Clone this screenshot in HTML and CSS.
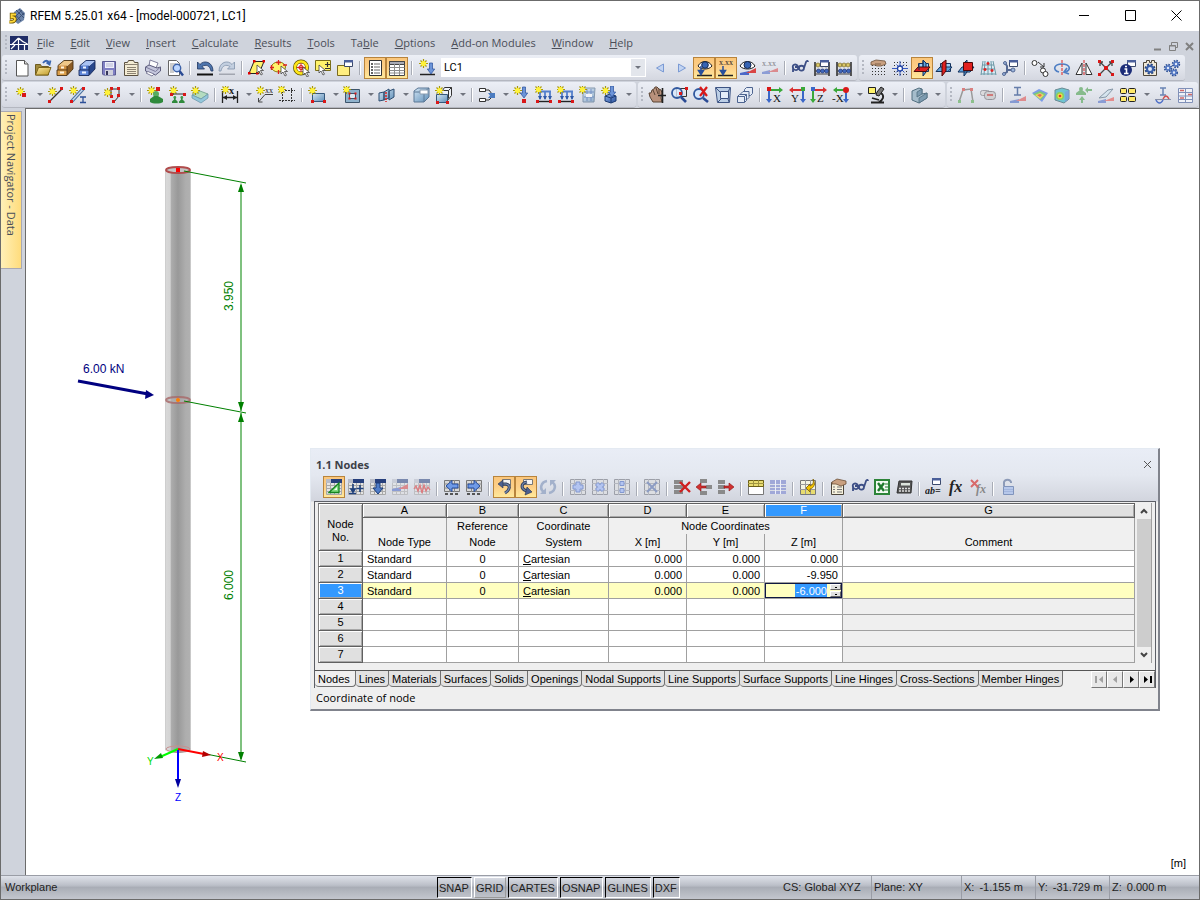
FILE: index.html
```html
<!DOCTYPE html>
<html lang="en">
<head>
    <meta charset="UTF-8">
    <meta name="viewport" content="width=device-width, initial-scale=1.0">
    <title>RFEM 5.25.01 x64 - [model-000721, LC1]</title>
    <link rel="stylesheet" href="styles.css">
</head>
<body>

<!-- icon library -->
<svg class="library" aria-hidden="true">
    <defs>
        <linearGradient id="gold" x1="0" y1="0" x2="1" y2="1"><stop offset="0" stop-color="#fbe9a0"/><stop offset="1" stop-color="#c09a28"/></linearGradient>
        <linearGradient id="steel" x1="0" y1="0" x2="1" y2="1"><stop offset="0" stop-color="#d4e6f5"/><stop offset="1" stop-color="#5f8fb8"/></linearGradient>
        <linearGradient id="navy" x1="0" y1="0" x2="1" y2="1"><stop offset="0" stop-color="#8fb0e8"/><stop offset="1" stop-color="#274f9c"/></linearGradient>
        <linearGradient id="tube" x1="0" y1="0" x2="1" y2="0">
            <stop offset="0" stop-color="#c8c8c8"/><stop offset="0.05" stop-color="#d8d8d8"/><stop offset="0.2" stop-color="#d4d4d4"/>
            <stop offset="0.24" stop-color="#adadad"/><stop offset="0.5" stop-color="#999999"/><stop offset="0.8" stop-color="#aeaeae"/>
            <stop offset="0.95" stop-color="#b0b0b0"/><stop offset="1" stop-color="#d8d8d8"/>
        </linearGradient>
        <pattern id="dots" width="3" height="3" patternUnits="userSpaceOnUse"><path d="M0 0h1v1h-1z" fill="#333"/></pattern>

        <g id="star"><path d="M4.500 0v9M0 4.500h9M1.500 1.500l6 6M7.500 1.500l-6 6" stroke="#a89808" stroke-width="1.200"/><circle cx="4.500" cy="4.500" r="2.600" fill="#fff23a"/></g>
        <path id="cursor" d="M0 0v8l2-2 2 4 1.500-.8-2-3.700h3z" fill="#fff" stroke="#444" stroke-width=".8"/>
        <g id="miniwin"><path d="M.5.5h8v6h-8z" fill="#fff" stroke="#3c4a6c"/><path d="M0 0h9v2.500h-9z" fill="#4a5f9a"/></g>
        <g id="sheet"><path d="M1.500 1.500h15v15h-15z" fill="#e4e4e4"/><path d="M1.500 4v12.500h15v-12.500M1 7.500h16M1 10.500h16M1 13.500h16M5.500 4v13M9.500 4v13M13.500 4v13" fill="none" stroke="#a8a8a8"/><path d="M6 1h11v4h-11z" fill="#263f7c"/><path d="M1 1h5v4h-5z" fill="#b8bcc8"/></g>
        <g id="sheet-ruled"><path d="M1.500 2.500h15v11h-15z" fill="#d8d8d8" stroke="#777"/><path d="M1 6h16M1 10h16M6.500 2v12M11.500 2v12" stroke="#888"/><path d="M2 16h3M7 16h3M12 16h3" stroke="#555" stroke-width="2"/></g>
        <g id="beads"><path d="M2 3v14M16 3v14" stroke="#333" stroke-width="1.600"/><path d="M2 6h14M2 12h14M2 15h14" stroke="#444"/><g fill="#d9c667" stroke="#6b5b18" stroke-width=".6"><circle cx="5" cy="6" r="2"/><circle cx="9" cy="6" r="2"/><circle cx="13" cy="6" r="2"/></g><g fill="#3f67bd" stroke="#1c2d66" stroke-width=".6"><circle cx="5.500" cy="12" r="2"/><circle cx="9.500" cy="12" r="2"/><circle cx="13.500" cy="12" r="2"/></g></g>
        <g id="support"><circle cx="4" cy="2" r="2" fill="#3f9a4a"/><path d="M3 3h2v2l3 3v2h-8v-2l3-3z" fill="#2f8a3c"/></g>
        <path id="arrdown" d="M-1.500 0h3v6h2.200l-3.700 5-3.700-5h2.200z" fill="#6c94d8" stroke="#274f9c" stroke-width=".7"/>
        <path id="arrleft" d="M13 5h-6v-3.500l-6 5.500 6 5.500v-3.500h6z" fill="#6f9ae6" stroke="#1c4496" stroke-width=".9"/>
        <g id="table-gray"><path d="M1.500 1.500h15v15h-15z" fill="#dcdee2" stroke="#9c9fa8"/><path d="M1 5.500h16M1 12.500h16M5.500 1v16M12.500 1v16" stroke="#b4b7c0"/></g>
        <g id="chart-base"><path d="M1 14l9-2v4h-9z" fill="#4b68c8"/><path d="M17 9v5h-10z" fill="#d94545"/></g>
        <g id="cube"><path d="M1 5l4-3h11v9l-5 5h-10z" fill="url(#steel)" stroke="#5c7896"/><path d="M1 6h10v10M11 6l5-4" fill="none" stroke="#5c7896"/></g>

        <symbol id="i-app" viewBox="0 0 18 18"><path d="M6 5l6-4 5 5-1 7-6 4-5-4z" fill="#6c84a8"/><path d="M8 3l8 8M11 2l5 6M6 6l7 8M16 6l-8 8M14 3l-7 7" stroke="#3d5278"/><path d="M8 7.500h-4.500v3c5-1.500 5 5-2 4.300" fill="none" stroke="#6e5600" stroke-width="3.400"/><path d="M8 7.500h-4.500v3c5-1.500 5 5-2 4.300" fill="none" stroke="#ffd93a" stroke-width="1.800"/></symbol>
        <symbol id="i-doc" viewBox="0 0 18 14"><path d="M0 0h18v14H0z" fill="#1f2c66"/><path d="M0 8.500h18M8.500 2v12M8.500 2l-7 7M8.500 2c3 3 6 5 9 6M1 13l4-4M14.500 9v5" fill="none" stroke="#fff" stroke-width="1.200"/></symbol>

        <symbol id="i-new" viewBox="0 0 18 18"><path d="M4.500 1.500h8l3.500 3.500v12h-11.500z" fill="#fff" stroke="#555"/><path d="M12.500 1.500v3.500h3.500" fill="#ddd" stroke="#555"/></symbol>
        <symbol id="i-open" viewBox="0 0 18 18"><path d="M1.500 16v-10.500h5l1 2h7v8.500z" fill="#a08a3c" stroke="#6e5c20"/><path d="M1.500 16l3-7.500h12.500l-3 7.500z" fill="url(#gold)" stroke="#7d6418"/><path d="M9 4c2-3 5-3 6 0M16.500 1.500l-1 4-3-2" fill="none" stroke="#3a66b0" stroke-width="1.800"/></symbol>
        <symbol id="i-cabinet" viewBox="0 0 18 18"><path d="M11 7l6-5v8l-6 6.500z" fill="#8c5c24"/><path d="M2 6.500l6-5h9l-6 5.500z" fill="#f0c888"/><path d="M2 6.500h9v4.500h-9z" fill="#d09040"/><path d="M1 11h10v5.500h-10z" fill="#dca04c"/><path d="M2 6.500l6-5h9v8.500l-6 6.500h-10v-5.500h1zM2 11h9M11 7v9" fill="none" stroke="#4a3214" stroke-width=".9"/><path d="M5 8.500h3M4 13.500h4" stroke="#fff3dc" stroke-width="1.800"/></symbol>
        <symbol id="i-cabinet-blue" viewBox="0 0 18 18"><path d="M11 7l6-5v8l-6 6.500z" fill="#27468c"/><path d="M2 6.500l6-5h9l-6 5.500z" fill="#a9c2f2"/><path d="M2 6.500h9v4.500h-9z" fill="#4c74c8"/><path d="M1 11h10v5.500h-10z" fill="#5f86d8"/><path d="M2 6.500l6-5h9v8.500l-6 6.500h-10v-5.500h1zM2 11h9M11 7v9" fill="none" stroke="#16295a" stroke-width=".9"/><path d="M5 8.500h3M4 13.500h4" stroke="#eef4ff" stroke-width="1.800"/></symbol>
        <symbol id="i-save" viewBox="0 0 18 18"><path d="M2.500 2.500h13v13.500h-12l-1-1z" fill="#8080c4" stroke="#5a5a92"/><path d="M5 3h9v6h-9z" fill="#eef0fa"/><path d="M6 5h7M6 7h7" stroke="#b4b5d2"/><path d="M5 11h8v5h-8z" fill="#cfd0dc"/><path d="M6 12h2v4h-2z" fill="#34345a"/></symbol>
        <symbol id="i-report" viewBox="0 0 18 18"><path d="M2.500 3.500h3l1-2h5l1 2h3.500v13h-13.500z" fill="#f4ecd4" stroke="#5a5040"/><path d="M2.500 5.500h13.500M5 8.500h9M5 10.500h9M5 12.500h9M5 14.500h9" stroke="#8c8272"/></symbol>
        <symbol id="i-print" viewBox="0 0 18 18"><path d="M5 7l1-6 8 3-2 5z" fill="#fff" stroke="#80809c"/><path d="M1.500 8l3.500-2 8 3 3.500-1v4l-5 4-10-4z" fill="#c4c6dc" stroke="#5c5c7c"/><path d="M1.500 8l10 4.500 5-4.500" fill="none" stroke="#7c7c9c"/><path d="M4 12.500l6 2.500-2 2-6-3z" fill="#fff" stroke="#80809c"/></symbol>
        <symbol id="i-preview" viewBox="0 0 18 18"><path d="M2.500 1.500h8l3 3v12h-11z" fill="#fff" stroke="#666"/><path d="M4 5h6M4 7h4M4 9h3M4 11h3M4 13h4" stroke="#999"/><circle cx="11" cy="9" r="3.700" fill="#bcd6ff" stroke="#3d62a8" stroke-width="1.400"/><path d="M13.500 12l3.500 4.500" stroke="#2a4a94" stroke-width="2.400"/></symbol>
        <symbol id="i-undo" viewBox="0 0 18 18"><path d="M1.500 3v7h7l-2.500-2.500c4-2.500 8-1 9 4.500h2c0-9-9-11.500-13-6.500z" fill="#4f76ae" stroke="#1e3560" stroke-width=".8"/><path d="M1 14.500h16v2h-16z" fill="#111"/></symbol>
        <symbol id="i-redo" viewBox="0 0 18 18"><path d="M16.500 3v7h-7l2.500-2.500c-4-2.500-8-1-9 4.500h-2c0-9 9-11.500 13-6.500z" fill="#c3cfe0" stroke="#8193ab" stroke-width=".8"/><path d="M1 14.500h16v1.500h-16z" fill="#a2a6b0"/></symbol>
        <symbol id="i-sel-plane" viewBox="0 0 18 18"><path d="M6 2.500h10l-5 12h-10z" fill="#fff36b" stroke="#222"/><path d="M5 1h2.500v2.500h-2.500zM14.500 1h2.500v2.500h-2.500zM0 13h2.500v2.500h-2.500zM8 13h2.500v2.500h-2.500z" fill="#d00"/><use href="#cursor" x="9" y="6"/></symbol>
        <symbol id="i-sel-ellipse" viewBox="0 0 18 18"><ellipse cx="8.500" cy="8" rx="7" ry="5" fill="#fff36b" stroke="#8a7a10"/><path d="M8.500 1v5M6 3.500h5M1.500 6v5M0 8.500h4M8.500 11v4M13 6h4" stroke="#d22" stroke-width="1.300"/><use href="#cursor" x="11" y="7"/></symbol>
        <symbol id="i-sel-ring" viewBox="0 0 18 18"><circle cx="9" cy="8.500" r="6" fill="#fff" stroke="#5c5200" stroke-width="4"/><circle cx="9" cy="8.500" r="6" fill="none" stroke="#ffe619" stroke-width="2.600"/><circle cx="9" cy="8.500" r="2" fill="#fff" stroke="#d22" stroke-width="1.200"/><path d="M9 4v9M5 8.500h8" stroke="#d22"/><use href="#cursor" x="11" y="8"/></symbol>
        <symbol id="i-sel-plus" viewBox="0 0 18 18"><path d="M1.500 1.500h15v10h-15z" fill="#fff36b" stroke="#7a6e18"/><path d="M11 5.500h5M13.500 3v5M11 9.500h5" stroke="#333" stroke-width="1.200"/><use href="#cursor" x="5" y="6"/></symbol>
        <symbol id="i-yellow-win" viewBox="0 0 18 18"><path d="M1.500 6.500h12v10h-12z" fill="#ffee80" stroke="#7a6a20"/><use href="#miniwin" x="8" y="1"/></symbol>
        <symbol id="i-list" viewBox="0 0 18 18"><path d="M3.500 1.500h12v15h-12z" fill="#fff" stroke="#333"/><path d="M5 5h2M5 8h2M5 11h2M5 14h2" stroke="#333" stroke-width="1.400"/><path d="M8 5h6M8 8h6M8 11h6M8 14h6" stroke="#666"/></symbol>
        <symbol id="i-table" viewBox="0 0 18 18"><path d="M1.500 2.500h15v14h-15z" fill="#fff" stroke="#444"/><path d="M1.500 2.500h15v3h-15z" fill="#a8aab4" stroke="#444"/><path d="M1.500 8.500h15M1.500 11.500h15M1.500 14h15M6.500 5v11M11.500 5v11" stroke="#8c8c8c"/></symbol>
        <symbol id="i-loadcase" viewBox="0 0 18 18"><use href="#star" x="1"/><path d="M2 15.500h15" stroke="#222" stroke-width="1.500"/><use href="#arrdown" x="13" y="4"/></symbol>
        <symbol id="i-prev" viewBox="0 0 18 18"><path d="M12.500 5v8l-7-4z" fill="#c2d4f2" stroke="#7a9ad4"/></symbol>
        <symbol id="i-next" viewBox="0 0 18 18"><path d="M5.500 5v8l7-4z" fill="#c2d4f2" stroke="#7a9ad4"/></symbol>
        <symbol id="i-eye-load" viewBox="0 0 18 18"><path d="M3 7c3-6 11-6 14 0-3 4-11 4-14 0z" fill="#fff" stroke="#222"/><circle cx="10" cy="6" r="3.300" fill="#3564b4" stroke="#14284e"/><path d="M2 16.500h15" stroke="#222" stroke-width="1.500"/><path d="M6 7v7M3.500 11.500l2.500 4 2.500-4z" fill="#274f9c" stroke="#274f9c" stroke-width="1.500"/></symbol>
        <symbol id="i-xxx-load" viewBox="0 0 18 18"><text x="2" y="6" class="glyph">x.xx</text><path d="M1 16.500h15" stroke="#222" stroke-width="1.500"/><path d="M6 7v7M3.500 11.500l2.500 4 2.500-4z" fill="#274f9c" stroke="#274f9c" stroke-width="1.500"/></symbol>
        <symbol id="i-eye-result" viewBox="0 0 18 18"><use href="#chart-base"/><path d="M1 7c3-6 12-6 15 0-3 4-12 4-15 0z" fill="#fff" stroke="#222"/><circle cx="8.500" cy="6" r="3.500" fill="#3564b4" stroke="#14284e"/></symbol>
        <symbol id="i-xxx-result" viewBox="0 0 18 18"><g opacity=".55"><text x="1" y="7" class="glyph">x.xx</text><path d="M1 13l8-2v4h-8z" fill="#4b68c8"/><path d="M17 9v4h-10z" fill="#d94545"/></g></symbol>
        <symbol id="i-glasses" viewBox="0 0 18 18"><path d="M7 7c-3-3-6-1-5 2s6 3 5-1l-3 0M8 9c0-3 5-3 5 0s-5 4-5 0M13 9l2-6c1-2 2-1 2 0M2 8v5" fill="none" stroke="#3d4f86" stroke-width="1.800"/></symbol>
        <symbol id="i-beads" viewBox="0 0 18 18"><use href="#beads"/></symbol>
        <symbol id="i-beads-win" viewBox="0 0 18 18"><use href="#beads"/><use href="#miniwin" x="7" y="1"/></symbol>
        <symbol id="i-grid-hand" viewBox="0 0 18 18"><path d="M2 6h15v11h-15z" fill="url(#dots)"/><path d="M2 3l5-2 9 1 1 3-5 2h-4l-2-1-4 0z" fill="#c9a080" stroke="#6c5038" stroke-width=".8"/><path d="M6 5l6 0" stroke="#6c5038" stroke-width=".8"/></symbol>
        <symbol id="i-grid-snap" viewBox="0 0 18 18"><path d="M1 2h16v15h-16z" fill="url(#dots)"/><path d="M9 2v15M1 9.500h16M5.500 5.500l8 8M13 5.500l-8 8" stroke="#3a5cc0"/><circle cx="9" cy="9.500" r="2.500" fill="#fff" stroke="#2244a8" stroke-width="1.300"/></symbol>
        <symbol id="i-wp-xy" viewBox="0 0 18 18"><path d="M5.500 4.500h10v8h-10z" fill="#9ccef4" stroke="#12305c"/><path d="M10 1l3 3v9l-3 4z" fill="#5fa4de" stroke="#12305c"/><path d="M5 8h12l-4 4.500h-12z" fill="#e02020" stroke="#4c0808"/><path d="M6 5v6M10 2v6" stroke="#12305c"/></symbol>
        <symbol id="i-wp-yz" viewBox="0 0 18 18"><path d="M5.500 4.500h10v8h-10z" fill="#9ccef4" stroke="#12305c"/><path d="M5 8h12l-4 4.500h-12z" fill="#5fa4de" stroke="#12305c"/><path d="M7 4l4-3v11l-4 5z" fill="#e02020" stroke="#4c0808"/></symbol>
        <symbol id="i-wp-xz" viewBox="0 0 18 18"><path d="M5 8h12l-4 5h-12zM7 4l3-3v12l-3 4z" fill="#5fa4de" stroke="#12305c"/><path d="M6.500 3.500h9v8h-9z" fill="#e02020" stroke="#4c0808"/></symbol>
        <symbol id="i-grid-red" viewBox="0 0 18 18"><path d="M4 2h10l3 14h-15z" fill="#dcecf6"/><path d="M4 2l-2 14M9 2v14M14 2l3 14M3 6h12M3 10h13M2 15h15M6 2l-1 14M12 2l1 14" stroke="#6d97a4"/><path d="M9 3v3M7.500 4.500h3M6 9v3M4.500 10.500h3M13 10v3M11.500 11.500h3" stroke="#d22" stroke-width="1.500"/></symbol>
        <symbol id="i-branch" viewBox="0 0 18 18"><path d="M3 15l3-2v-6l-2-3M6 11h6" fill="none" stroke="#566a94" stroke-width="2"/><circle cx="4" cy="4" r="1.500" fill="#9ab4dc" stroke="#566a94"/><circle cx="12" cy="11" r="2" fill="#9ab4dc" stroke="#566a94"/><circle cx="3" cy="15" r="1.500" fill="#9ab4dc" stroke="#566a94"/><use href="#miniwin" x="8" y="1"/></symbol>
        <symbol id="i-copy" viewBox="0 0 18 18"><g fill="#fff" stroke="#333"><circle cx="3.500" cy="4" r="2.500"/><circle cx="12" cy="11.500" r="2.500"/><circle cx="14.500" cy="15" r="2.500"/></g><path d="M7 3l6 5M13 4v4h-4" fill="none" stroke="#333"/></symbol>
        <symbol id="i-rotate" viewBox="0 0 18 18"><path d="M6 13c-7-2-5-8 3-8s10 6 3 8M14 9l-3 4 5 2" fill="none" stroke="#4f7fc4" stroke-width="1.700"/><path d="M9 1v16" stroke="#d22" stroke-dasharray="3 1"/></symbol>
        <symbol id="i-mirror" viewBox="0 0 18 18"><path d="M7 4v11.500h-6zM11 4v11.500h6z" fill="#fff" stroke="#333"/><path d="M9 1v16" stroke="#d22" stroke-dasharray="3 1"/></symbol>
        <symbol id="i-scale" viewBox="0 0 18 18"><path d="M3 3l12 12M15 3l-12 12M3 7v-4h3M15 7v-4h-3" fill="none" stroke="#444" stroke-width="1.300"/><path d="M1 1h3v3h-3zM14 1h3v3h-3zM1 14h3v3h-3zM14 14h3v3h-3zM7 7h4v4h-4z" fill="#d91818"/></symbol>
        <symbol id="i-info" viewBox="0 0 18 18"><use href="#miniwin" x="8" y="1"/><circle cx="7" cy="11" r="6" fill="#1b2c78"/><path d="M6 7.500h2M5.500 10h2v4M5 14.500h4.500" stroke="#fff" stroke-width="1.600" fill="none"/></symbol>
        <symbol id="i-settings" viewBox="0 0 18 18"><path d="M2.500 3.500h3v-2h3v2h2v-2h3v2h2v13h-13z" fill="#f2ead8" stroke="#4d463a"/><circle cx="9" cy="10" r="4.200" fill="none" stroke="#284884" stroke-width="2.600" stroke-dasharray="2 1.300"/><circle cx="9" cy="10" r="3" fill="#dfe9f8" stroke="#3a5fa8" stroke-width="2"/></symbol>
        <symbol id="i-gears" viewBox="0 0 18 18"><g fill="none" stroke="#2c4f94" stroke-width="2" stroke-dasharray="1.500 1"><circle cx="5" cy="9" r="3.200"/><circle cx="13" cy="5" r="3.200"/><circle cx="11" cy="13.500" r="3"/></g><g fill="#dfe9f8" stroke="#5378c4" stroke-width="1.600"><circle cx="5" cy="9" r="2"/><circle cx="13" cy="5" r="2"/><circle cx="11" cy="13.500" r="2"/></g></symbol>

        <symbol id="i-node" viewBox="0 0 18 18"><use href="#star" x="4" y="1"/><path d="M10 7h4v4h-4z" fill="#d91818"/></symbol>
        <symbol id="i-line" viewBox="0 0 18 18"><use href="#star" x="1" y="1"/><path d="M3 15l12-12" stroke="#333" stroke-width="1.300"/><path d="M13 1h3v3h-3zM1 14h3v3h-3z" fill="#d91818"/></symbol>
        <symbol id="i-member" viewBox="0 0 18 18"><use href="#star"/><path d="M3 15l11-12" stroke="#4b6e9c" stroke-width="3.400"/><path d="M3 15l11-12" stroke="#c4daf0" stroke-width="1.400"/><path d="M13 1h3v3h-3zM1 14h3v3h-3z" fill="#d91818"/><path d="M11 11h6M11 16.500h6M14 11v5" stroke="#2d5098" stroke-width="1.300"/></symbol>
        <symbol id="i-polyline" viewBox="0 0 18 18"><path d="M7 3h8v7l-5 6M7 3v7" fill="none" stroke="#333"/><path d="M6 1h3v3h-3zM13 1h3v3h-3zM13 8h3v3h-3zM6 9h3v3h-3zM8 14h3v3h-3z" fill="#d91818"/><use href="#star" x="-1" y="2"/></symbol>
        <symbol id="i-support" viewBox="0 0 18 18"><use href="#star"/><path d="M9 1h4v4h-4z" fill="#d91818"/><circle cx="9" cy="8" r="3" fill="#58ac60"/><path d="M7 10h4l5 3v3c-3 2-10 2-13 0v-3z" fill="#2f8a3c"/></symbol>
        <symbol id="i-line-support" viewBox="0 0 18 18"><use href="#star"/><path d="M3 8h12" stroke="#333"/><path d="M1 7h3v3h-3zM14 7h3v3h-3z" fill="#d91818"/><g transform="translate(3 10) scale(.7)"><use href="#support"/><use href="#support" x="10"/></g></symbol>
        <symbol id="i-foundation" viewBox="0 0 18 18"><path d="M1 9l8-4 8 3-7 5z" fill="#b4dcc0" stroke="#6e9c8c" stroke-width=".8"/><path d="M1 9v3l9 5 7-5v-4l-7 5z" fill="#94c8dc" stroke="#6e98ac" stroke-width=".8"/><use href="#star"/></symbol>
        <symbol id="i-dimension" viewBox="0 0 18 18"><path d="M1.500 5v12M16.500 5v12M2 11.500h14" stroke="#222" stroke-width="1.300"/><path d="M2 11.500l4-2.500v5zM16 11.500l-4-2.500v5z" fill="#222"/><use href="#star" y="-1"/><text x="8" y="8" class="glyph bold">x</text></symbol>
        <symbol id="i-comment" viewBox="0 0 18 18"><path d="M17 8.500h-8l-6 7M2.500 12v4h4" fill="none" stroke="#444"/><use href="#star"/><text x="9" y="7" class="glyph">xx</text></symbol>
        <symbol id="i-guides" viewBox="0 0 18 18"><path d="M4.500 2v15M13.500 2v15M1 4.500h16M1 14.500h16" stroke="#333" stroke-dasharray="2 1"/><use href="#star" x="-1" y="-1"/></symbol>
        <symbol id="i-surface" viewBox="0 0 18 18"><path d="M4.500 7.500h12v8h-12z" fill="url(#steel)" stroke="#35587c"/><use href="#star"/><path d="M3 14h3v3h-3zM15 14h3v3h-3z" fill="#d91818"/></symbol>
        <symbol id="i-opening" viewBox="0 0 18 18"><path d="M2.500 3.500h14v13h-14z" fill="#8fb2cc" stroke="#3d556c"/><path d="M6.500 7.500h6v5h-6z" fill="#dfe8f0" stroke="#3d556c"/><path d="M5.500 6.500h2v2h-2zM11.500 6.500h2v2h-2zM5.500 11.500h2v2h-2zM11.500 11.500h2v2h-2z" fill="#d91818"/><use href="#star" x="-1" y="-1"/></symbol>
        <symbol id="i-intersect" viewBox="0 0 18 18"><path d="M1 7l5-1v8l-5 1zM6 6l5-3v9l-5 2zM11 5l5-2v8l-5 3z" fill="url(#steel)" stroke="#2c4c70"/><path d="M8 6v10" stroke="#d22" stroke-dasharray="2 1" stroke-width="1.500"/></symbol>
        <symbol id="i-solid" viewBox="0 0 18 18"><use href="#cube"/><path d="M7 4h8v4h-8z" fill="#fff" stroke="#8a9cb0"/></symbol>
        <symbol id="i-extrude" viewBox="0 0 18 18"><path d="M7.500 4.500l2-3h7v8l-4 5" fill="#eef2f8" stroke="#333"/><path d="M7.500 4.500h6v8M13.500 4.500l3-3" fill="none" stroke="#333"/><path d="M1.500 8.500h11v8h-11z" fill="url(#steel)" stroke="#35587c"/><use href="#star"/><path d="M1 15h3v3h-3zM11 15h3v3h-3z" fill="#d91818"/></symbol>
        <symbol id="i-release" viewBox="0 0 18 18"><path d="M1.500 2.500h6v3h-6zM1.500 12.500h6v3h-6z" fill="#fff" stroke="#333"/><path d="M8 4h3l3 4M14 11l-3 3h-3" fill="none" stroke="#333"/><path d="M10 7h7v5h-7l2-2.500z" fill="#4c7cc0"/></symbol>
        <symbol id="i-node-load" viewBox="0 0 18 18"><use href="#star"/><use href="#arrdown" x="11" y="1"/><path d="M9 13h4v4h-4z" fill="#d91818"/></symbol>
        <symbol id="i-line-load" viewBox="0 0 18 18"><path d="M5 5.500h11M5 5v8M10 5v8M15 5v8" fill="none" stroke="#5580cc" stroke-width="1.800"/><path d="M3 10l2 4 2-4zM8 10l2 4 2-4zM13 10l2 4 2-4z" fill="#2f59a8"/><path d="M2 15.500h14" stroke="#222" stroke-width="1.400"/><path d="M1 14h3v3h-3zM14 14h3v3h-3z" fill="#d91818"/><use href="#star" x="-1" y="-1"/></symbol>
        <symbol id="i-surface-load" viewBox="0 0 18 18"><g opacity=".6"><path d="M4 2h12l-1 14h-11z" fill="url(#steel)" stroke="#476584"/><path d="M5 6h10M5 11h10M8 3v12M12 3v12" stroke="#2f59a8"/><path d="M7 8h6v3h-6z" fill="#fff"/></g><use href="#star" x="-1" y="-1"/></symbol>
        <symbol id="i-solid-load" viewBox="0 0 18 18"><path d="M4 10l5-2 6 2v5l-5 2-6-2z" fill="url(#navy)" stroke="#1b3a72"/><path d="M4 10l6 2 5-2M10 12v5" fill="none" stroke="#1b3a72"/><use href="#star"/><use href="#arrdown" x="11" y="0"/></symbol>
        <symbol id="i-pan" viewBox="0 0 18 18"><path d="M5 16l-3-5-1-4h2l1-3 2-1 1-2h2l2 2 2 1 1 3-1 5 1 4z" fill="#b8917c" stroke="#5a4434"/><path d="M5 4l2 5M8 2l2 6M11 3l0 5" stroke="#5a4434"/><path d="M14.500 2v15M10 9.500h8" stroke="#222" stroke-width="1.600"/></symbol>
        <symbol id="i-zoom-win" viewBox="0 0 18 18"><path d="M6.500 2.500h10v8h-10z" fill="none" stroke="#333"/><circle cx="7" cy="7" r="5" fill="#d8e8fb" fill-opacity=".8" stroke="#31589e" stroke-width="1.800"/><path d="M11 11l5 5" stroke="#2a4a94" stroke-width="2.600"/><path d="M15 1h3v3h-3zM9 6h3v3h-3z" fill="#d91818"/></symbol>
        <symbol id="i-zoom-del" viewBox="0 0 18 18"><circle cx="7" cy="8" r="5" fill="#d8e8fb" stroke="#31589e" stroke-width="1.800"/><path d="M11 12l5 4" stroke="#2a4a94" stroke-width="2.600"/><path d="M8 1l7 9M15 1l-7 9" stroke="#d91818" stroke-width="2.200"/></symbol>
        <symbol id="i-iso" viewBox="0 0 18 18"><path d="M1.500 1.500h15l-1 15h-12z" fill="#bccfe6" stroke="#3d5484"/><path d="M6.500 5.500h8v7h-8z" fill="#e4eefa" stroke="#3d5484"/><path d="M2 2l4 4M16 2l-2 4M4 16l3-3M15 16l-1-3" fill="none" stroke="#3d5484"/></symbol>
        <symbol id="i-boxes" viewBox="0 0 18 18"><g fill="#e4ebf6" stroke="#4d6490"><path d="M8.500 3.500l2-2h6v6l-2 2h-6z"/><path d="M5 7.500l2-2h6v6l-2 2h-6z"/><path d="M1.500 10.500h7v6h-7zM1.500 10.500l2-2h7l-2 2M10.500 8.500v6l-2 2"/></g></symbol>
        <symbol id="i-view-x" viewBox="0 0 18 18"><path d="M2 3h2v10h2l-3 4-3-4h2z" fill="#3b67c8"/><path d="M4 3h9v-2l4 3-4 3v-2h-9z" fill="#3aa83a"/><path d="M1 1h4v4h-4z" fill="#d91818"/><text x="7" y="16" class="axis">X</text></symbol>
        <symbol id="i-view-y" viewBox="0 0 18 18"><path d="M14 3h2v10h2l-3 4-3-4h2z" fill="#3b67c8"/><path d="M14 3h-9v-2l-4 3 4 3v-2h9z" fill="#d93030"/><path d="M13 1h4v4h-4z" fill="#3aa83a"/><text x="3" y="16" class="axis">Y</text></symbol>
        <symbol id="i-view-z" viewBox="0 0 18 18"><path d="M2 3h2v10h2l-3 4-3-4h2z" fill="#3aa83a"/><path d="M4 3h9v-2l4 3-4 3v-2h-9z" fill="#d93030"/><path d="M1 1h4v4h-4z" fill="#3b67c8"/><text x="7" y="16" class="axis">Z</text></symbol>
        <symbol id="i-view-mx" viewBox="0 0 18 18"><path d="M13 5h2v8h2l-3 4-3-4h2z" fill="#3b67c8"/><path d="M14 3h-9v-2l-4 3 4 3v-2h9z" fill="#3aa83a"/><circle cx="14" cy="4" r="3" fill="#d91818"/><text x="0" y="16" class="axis">-X</text></symbol>
        <symbol id="i-microscope" viewBox="0 0 18 18"><path d="M10 6l4-5 3 2-5 7-3-1z" fill="#777" stroke="#222"/><path d="M5 12l7 2M14 7c4 3 2 7-2 9M4 16.500h13" fill="none" stroke="#222" stroke-width="1.800"/><path d="M1.500 1.500h7v6h-7z" fill="#fff36b" stroke="#222"/></symbol>
        <symbol id="i-render" viewBox="0 0 18 18"><path d="M2 5l7-3 3 1v5l5-1v5l-8 5-7-3z" fill="#a5bccb" stroke="#526f80"/><path d="M7 6l5-3v5l-5 3zM9 12l8-5v5l-8 5z" fill="#7d9bb0" stroke="#526f80" stroke-width=".8"/></symbol>
        <symbol id="i-frame" viewBox="0 0 18 18"><path d="M2 16l4-12 8-1 2 13" fill="none" stroke="#999" stroke-width="1.500"/><path d="M5 2h3v3h-3zM13 2h3v3h-3z" fill="#d98080"/><path d="M1 14h3v3h-3zM14 14h3v3h-3z" fill="#8cc08c"/></symbol>
        <symbol id="i-tape" viewBox="0 0 18 18"><rect x="1.500" y="4.500" width="9" height="5" rx="2" fill="#dadadc" stroke="#a0a0a6"/><rect x="5.500" y="5.500" width="11" height="8" rx="3" fill="#d0d0d2" stroke="#94949a"/><path d="M8 9h6" stroke="#cf7a7a" stroke-width="2"/></symbol>
        <symbol id="i-res-member" viewBox="0 0 18 18"><g opacity=".75"><path d="M5 1.500h7M5 9h7M8.500 2v7" stroke="#3b5a94" stroke-width="1.500"/><path d="M1 15l9-2v4h-9z" fill="#6a84cc"/><path d="M17 10v5h-10z" fill="#e07070"/></g></symbol>
        <symbol id="i-res-surface" viewBox="0 0 18 18"><path d="M1 7l7-4 9 4-6 9z" fill="#7c9ce8"/><path d="M2 8l7-3 6 3-5 6z" fill="#7cc87c"/><path d="M4 9l5-2 4 2-4 4z" fill="#f0d860"/><path d="M6 9l3-1 2 1-2 2z" fill="#e06a5a"/></symbol>
        <symbol id="i-res-solid" viewBox="0 0 18 18"><path d="M2 4l7-2 7 2v9l-5 4-9-3z" fill="#6fc4d0" stroke="#6a8c94"/><circle cx="7" cy="10" r="4" fill="#8cd05c"/><circle cx="7" cy="10" r="2.500" fill="#f4dc4c"/><circle cx="7" cy="10" r="1.300" fill="#dc3c28"/><path d="M12 6l4-2v9l-4 3z" fill="#7c9ce0" fill-opacity=".7"/></symbol>
        <symbol id="i-reactions" viewBox="0 0 18 18"><g fill="#86bb8c"><circle cx="6" cy="3" r="2"/><path d="M5 4h2l4 3v2h-10v-2zM17 3h-4v-2l-3 3 3 3v-2h4zM6 17v-3h-2l3-4 3 4h-2v3z"/></g></symbol>
        <symbol id="i-section-res" viewBox="0 0 18 18"><path d="M2 12l9-8 5-1-7 8z" fill="#d6e4ee" stroke="#8899a8"/><path d="M1 15l8-2v4h-8z" fill="#8a9cd4"/><path d="M17 11v4h-10z" fill="#e48c8c"/></symbol>
        <symbol id="i-tiles" viewBox="0 0 18 18"><g fill="#ffe96a" stroke="#222"><rect x="1.500" y="2.500" width="6" height="5" rx="1"/><rect x="9.500" y="2.500" width="7" height="5" rx="1"/><rect x="1.500" y="10.500" width="6" height="5" rx="1"/><rect x="9.500" y="10.500" width="7" height="5" rx="1"/></g></symbol>
        <symbol id="i-res-curve" viewBox="0 0 18 18"><path d="M6 2h6M6 9h6M9 2v7" stroke="#6a84b4" stroke-width="1.500"/><path d="M1 13.500h16" stroke="#8890a8"/><path d="M9 13c2-4 4-4 6 0" fill="none" stroke="#d05050" stroke-width="1.500"/><path d="M2 14c2 4 5 4 7 0" fill="none" stroke="#5070c8" stroke-width="1.500"/></symbol>
        <symbol id="i-res-table" viewBox="0 0 18 18"><path d="M2.500 2.500h14v14h-14z" fill="#f0f2f8" stroke="#8090b8"/><path d="M2 6.500h15M2 10h15M2 13.500h15M9.500 2v15" stroke="#8090b8"/><path d="M4 4.500h4M12 8.500h4M4 12h4" stroke="#d06868" stroke-width="1.400"/></symbol>

        <symbol id="i-t-edit" viewBox="0 0 18 18"><use href="#sheet"/><path d="M4 14.500l10-9.500v9.500z" fill="#7fdc7f" stroke="#15851f" stroke-width="1.300"/><path d="M9 12l3-3v3z" fill="#f0fff0"/></symbol>
        <symbol id="i-t-insert" viewBox="0 0 18 18"><use href="#sheet"/><path d="M6 6v5M4 11l2 3 2-3zM2 15.500h7M13 7v7M9.500 10.500h7" stroke="#20417c" stroke-width="1.600" fill="#20417c"/></symbol>
        <symbol id="i-t-down" viewBox="0 0 18 18"><use href="#sheet"/><path d="M7 5h4v5h3l-5 6-5-6h3z" fill="#4f7cc8" stroke="#1c3c78"/></symbol>
        <symbol id="i-t-result" viewBox="0 0 18 18"><g opacity=".55"><use href="#sheet"/><use href="#chart-base" y="-3"/></g></symbol>
        <symbol id="i-t-wave" viewBox="0 0 18 18"><g opacity=".55"><use href="#sheet"/><path d="M1 11l2-3 2 5 2-6 2 8 2-8 2 6 2-4 2 3" fill="none" stroke="#e02c2c" stroke-width="1.300"/></g></symbol>
        <symbol id="i-t-left" viewBox="0 0 18 18"><use href="#sheet-ruled"/><use href="#arrleft" x="2" y="1"/></symbol>
        <symbol id="i-t-right" viewBox="0 0 18 18"><use href="#sheet-ruled"/><g transform="translate(16 1) scale(-1 1)"><use href="#arrleft"/></g></symbol>
        <symbol id="i-t-hook" viewBox="0 0 18 18"><path d="M7.500 1.500h8v6h-8z" fill="#f4f4f4" stroke="#777"/><path d="M6 6h5c5 1 4 6-1 9" fill="none" stroke="#34425e" stroke-width="3"/><path d="M6 6h5c5 1 4 6-1 9" fill="none" stroke="#7488b0" stroke-width="1.200"/><path d="M8 2v8l-5-4z" fill="#4c6090" stroke="#26324e" stroke-width=".6"/></symbol>
        <symbol id="i-t-hook2" viewBox="0 0 18 18"><path d="M6.500 1.500h9v5h-9z" fill="#f4f4f4" stroke="#777"/><path d="M10 4c-6 1-7 7 0 9" fill="none" stroke="#34425e" stroke-width="3.200"/><path d="M10 4c-6 1-7 7 0 9" fill="none" stroke="#7488b0" stroke-width="1.200"/><path d="M10 9l5 5-7 3z" fill="#4c6090" stroke="#26324e" stroke-width=".6"/></symbol>
        <symbol id="i-t-sync" viewBox="0 0 18 18"><path d="M8 3c-6 1-8 8-3 11M10 15c6-1 8-8 3-11" fill="none" stroke="#a3b1cb" stroke-width="2.600"/><path d="M7 10v6h-6zM11 8v-6h6z" fill="#a3b1cb"/></symbol>
        <symbol id="i-t-plus" viewBox="0 0 18 18"><use href="#table-gray"/><path d="M7 4h4v3h3v4h-3v3h-4v-3h-3v-4h3z" fill="#b3c4f0" stroke="#8298d0"/></symbol>
        <symbol id="i-t-times" viewBox="0 0 18 18"><use href="#table-gray"/><path d="M5.500 5.500l7 7M12.500 5.500l-7 7" stroke="#8298d0" stroke-width="4.400"/><path d="M6 6l6 6M12 6l-6 6" stroke="#b3c4f0" stroke-width="2.600"/></symbol>
        <symbol id="i-t-div" viewBox="0 0 18 18"><use href="#table-gray"/><path d="M7 3.500h4v4h-4zM7 10.500h4v4h-4z" fill="#b3c4f0" stroke="#8298d0"/></symbol>
        <symbol id="i-t-clear" viewBox="0 0 18 18"><use href="#table-gray"/><path d="M4 4l10 10M14 4l-10 10" stroke="#8c9cc4" stroke-width="2"/></symbol>
        <symbol id="i-row-del" viewBox="0 0 18 18"><path d="M1 2h9v4h-9zM1 7h11v4h-11zM1 12h9v4h-9z" fill="#8a8a8a"/><path d="M7 4l10 10M17 4l-10 10" stroke="#cf1f1f" stroke-width="2.400"/></symbol>
        <symbol id="i-row-ins" viewBox="0 0 18 18"><path d="M5 1h7v4h-7zM11 7h6v4h-6zM5 13h7v4h-7z" fill="#8a8a8a"/><path d="M11 8h-5v-3l-5 4 5 4v-3h5z" fill="#d03030" stroke="#8c1010" stroke-width=".6"/></symbol>
        <symbol id="i-row-out" viewBox="0 0 18 18"><path d="M1 2h7v4h-7zM1 7h7v4h-7zM1 12h7v4h-7z" fill="#8a8a8a"/><path d="M7 8h5v-3l5 4-5 4v-3h-5z" fill="#d03030" stroke="#8c1010" stroke-width=".6"/></symbol>
        <symbol id="i-sheet-gold" viewBox="0 0 18 18"><path d="M1.500 2.500h15v14h-15z" fill="#fff" stroke="#777"/><path d="M1.500 2.500h15v6h-15z" fill="#e8dc70" stroke="#6c6018"/><path d="M1 5.500h16M6.500 2v6M11.500 2v6" stroke="#a09440"/></symbol>
        <symbol id="i-sheet-lilac" viewBox="0 0 18 18"><path d="M1 2h16v4h-16zM1 7h16v2h-16zM1 10h16v2h-16zM1 13h16v3h-16z" fill="#a0a8d8"/><path d="M6.500 2v14M11.500 2v14" stroke="#eceefa"/></symbol>
        <symbol id="i-sheet-jump" viewBox="0 0 18 18"><path d="M1.500 2.500h15v14h-15z" fill="#f4f4e4" stroke="#777"/><path d="M2 11h14v5h-14z" fill="#e8dc70"/><path d="M6.500 2v14M11.500 2v14M1 6.500h15M1 11.500h15" stroke="#999"/><path d="M14 1c3 5 1 9-3 10v3l-4-4 4-4v2c3-1 4-4 3-7z" fill="#f5c400" stroke="#7a5c00" stroke-width=".8"/></symbol>
        <symbol id="i-form-hand" viewBox="0 0 18 18"><path d="M2.500 4.500h12v12h-12z" fill="#f6f1dc" stroke="#4d463a"/><path d="M4 9h2M8 9h5M4 11.500h2M8 11.500h5M4 14h2M8 14h5" stroke="#777"/><path d="M3 4l5-3 9 2v3l-5 2-5-2h-4z" fill="#c9a080" stroke="#6c5038" stroke-width=".8"/></symbol>
        <symbol id="i-excel" viewBox="0 0 18 18"><path d="M2 2h14v14h-14z" fill="#f2faf2" stroke="#2c8438" stroke-width="2"/><path d="M5 5l6 8M11 5l-6 8" stroke="#1e7a2c" stroke-width="2.400"/><path d="M12 6h3M12 9h3M12 12h3" stroke="#1e7a2c"/></symbol>
        <symbol id="i-calc" viewBox="0 0 18 18"><path d="M4 3h13l-1 12h-14z" fill="#555" stroke="#333"/><path d="M6 5h9v2.500h-9z" fill="#dde4dd"/><path d="M4 10.500h11M4 13h11" stroke="#ddd" stroke-width="1.500" stroke-dasharray="2 1"/></symbol>
        <symbol id="i-ab" viewBox="0 0 18 18"><use href="#miniwin" x="7" y="0"/><text x="0" y="16" class="formula small">ab=</text></symbol>
        <symbol id="i-fx" viewBox="0 0 18 18"><text x="2" y="14" class="formula">fx</text></symbol>
        <symbol id="i-fx-del" viewBox="0 0 18 18"><text x="7" y="15" class="formula faded">fx</text><path d="M2 2l7 7M9 2l-7 7" stroke="#d86a6a" stroke-width="2"/></symbol>
        <symbol id="i-lock" viewBox="0 0 18 18"><path d="M5 8v-4c1-3 6-3 7 0v1" fill="none" stroke="#8d9bb8" stroke-width="2"/><path d="M4.500 8.500h10v8h-10z" fill="#b7c8ea" stroke="#8094bc"/><path d="M5 11.500h9M5 13.500h9" stroke="#a3b6de"/></symbol>
    </defs>
</svg>

<div class="window">
    <header class="titlebar">
        <svg class="app-icon"><use href="#i-app"/></svg>
        <h1>RFEM 5.25.01 x64 - [model-000721, LC1]</h1>
        <div class="caption-buttons">
            <button aria-label="Minimize"><svg viewBox="0 0 11 11"><path d="M0 5.500h10"/></svg></button>
            <button aria-label="Maximize"><svg viewBox="0 0 11 11"><path d="M.5.5h10v10H.5z"/></svg></button>
            <button aria-label="Close"><svg viewBox="0 0 11 11"><path d="M.5.5l10 10M10.500.5l-10 10"/></svg></button>
        </div>
    </header>

    <nav class="menubar">
        <span class="grip"></span>
        <svg class="doc-icon"><use href="#i-doc"/></svg>
        <button><u>F</u>ile</button>
        <button><u>E</u>dit</button>
        <button><u>V</u>iew</button>
        <button><u>I</u>nsert</button>
        <button><u>C</u>alculate</button>
        <button><u>R</u>esults</button>
        <button><u>T</u>ools</button>
        <button>Ta<u>b</u>le</button>
        <button><u>O</u>ptions</button>
        <button><u>A</u>dd-on Modules</button>
        <button><u>W</u>indow</button>
        <button><u>H</u>elp</button>
        <div class="mdi-buttons">
            <button aria-label="Minimize document"><svg viewBox="0 0 9 9"><path d="M1 7.500h7" stroke-width="2"/></svg></button>
            <button aria-label="Restore document"><svg viewBox="0 0 9 9"><path d="M2.500 3v-2.500h6v5h-2M.5 3.500h6v5h-6zM0 4h7" stroke-width="1"/></svg></button>
            <button aria-label="Close document"><svg viewBox="0 0 9 9"><path d="M1 1l7 7M8 1l-7 7" stroke-width="2"/></svg></button>
        </div>
    </nav>

    <div class="toolrow">
        <div class="toolbar">
            <span class="grip"></span>
            <button class="tool" aria-label="New"><svg><use href="#i-new"/></svg></button>
            <button class="tool" aria-label="Open"><svg><use href="#i-open"/></svg></button>
            <button class="tool" aria-label="Block manager"><svg><use href="#i-cabinet"/></svg></button>
            <button class="tool" aria-label="Project manager"><svg><use href="#i-cabinet-blue"/></svg></button>
            <button class="tool" aria-label="Save"><svg><use href="#i-save"/></svg></button>
            <button class="tool" aria-label="Report"><svg><use href="#i-report"/></svg></button>
            <button class="tool" aria-label="Print"><svg><use href="#i-print"/></svg></button>
            <button class="tool" aria-label="Preview"><svg><use href="#i-preview"/></svg></button>
            <span class="sep"></span>
            <button class="tool" aria-label="Undo"><svg><use href="#i-undo"/></svg></button>
            <button class="tool" aria-label="Redo"><svg><use href="#i-redo"/></svg></button>
            <span class="sep"></span>
            <button class="tool" aria-label="Select by plane"><svg><use href="#i-sel-plane"/></svg></button>
            <button class="tool" aria-label="Select by ellipse"><svg><use href="#i-sel-ellipse"/></svg></button>
            <button class="tool" aria-label="Select by ring"><svg><use href="#i-sel-ring"/></svg></button>
            <button class="tool" aria-label="Select special"><svg><use href="#i-sel-plus"/></svg></button>
            <button class="tool" aria-label="New window"><svg><use href="#i-yellow-win"/></svg></button>
            <span class="sep"></span>
            <button class="tool on" aria-label="Navigator"><svg><use href="#i-list"/></svg></button>
            <button class="tool on" aria-label="Tables"><svg><use href="#i-table"/></svg></button>
            <span class="sep"></span>
            <button class="tool" aria-label="New load case"><svg><use href="#i-loadcase"/></svg></button>
            <div class="combo">
                <select aria-label="Load case"><option>LC1</option></select>
            </div>
            <button class="tool" aria-label="Previous load case"><svg><use href="#i-prev"/></svg></button>
            <button class="tool" aria-label="Next load case"><svg><use href="#i-next"/></svg></button>
            <button class="tool on" aria-label="Show loads"><svg><use href="#i-eye-load"/></svg></button>
            <button class="tool on" aria-label="Show load values"><svg><use href="#i-xxx-load"/></svg></button>
            <button class="tool" aria-label="Show results"><svg><use href="#i-eye-result"/></svg></button>
            <button class="tool" aria-label="Show result values"><svg><use href="#i-xxx-result"/></svg></button>
            <span class="sep"></span>
            <button class="tool" aria-label="Check"><svg><use href="#i-glasses"/></svg></button>
            <button class="tool" aria-label="Calculation parameters"><svg><use href="#i-beads-win"/></svg></button>
            <button class="tool" aria-label="Calculate all"><svg><use href="#i-beads"/></svg></button>
        </div>
        <div class="toolbar">
            <span class="grip"></span>
            <button class="tool" aria-label="Work plane grid"><svg><use href="#i-grid-hand"/></svg></button>
            <button class="tool" aria-label="Snap"><svg><use href="#i-grid-snap"/></svg></button>
            <button class="tool on" aria-label="Plane XY"><svg><use href="#i-wp-xy"/></svg></button>
            <button class="tool" aria-label="Plane YZ"><svg><use href="#i-wp-yz"/></svg></button>
            <button class="tool" aria-label="Plane XZ"><svg><use href="#i-wp-xz"/></svg></button>
            <button class="tool" aria-label="Grid points"><svg><use href="#i-grid-red"/></svg></button>
            <button class="tool" aria-label="Coordinate systems"><svg><use href="#i-branch"/></svg></button>
            <span class="sep"></span>
            <button class="tool" aria-label="Copy"><svg><use href="#i-copy"/></svg></button>
            <button class="tool" aria-label="Rotate"><svg><use href="#i-rotate"/></svg></button>
            <button class="tool" aria-label="Mirror"><svg><use href="#i-mirror"/></svg></button>
            <button class="tool" aria-label="Scale"><svg><use href="#i-scale"/></svg></button>
            <button class="tool" aria-label="Info"><svg><use href="#i-info"/></svg></button>
            <button class="tool" aria-label="Settings"><svg><use href="#i-settings"/></svg></button>
            <button class="tool" aria-label="Modules"><svg><use href="#i-gears"/></svg></button>
        </div>
    </div>

    <div class="toolrow last">
        <div class="toolbar">
            <span class="grip"></span>
            <button class="tool drop" aria-label="New node"><svg><use href="#i-node"/></svg></button>
            <button class="tool" aria-label="New line"><svg><use href="#i-line"/></svg></button>
            <button class="tool drop" aria-label="New member"><svg><use href="#i-member"/></svg></button>
            <button class="tool drop" aria-label="New polyline"><svg><use href="#i-polyline"/></svg></button>
            <span class="sep"></span>
            <button class="tool" aria-label="Nodal support"><svg><use href="#i-support"/></svg></button>
            <button class="tool" aria-label="Line support"><svg><use href="#i-line-support"/></svg></button>
            <button class="tool" aria-label="Surface support"><svg><use href="#i-foundation"/></svg></button>
            <span class="sep"></span>
            <button class="tool drop" aria-label="Dimension"><svg><use href="#i-dimension"/></svg></button>
            <button class="tool" aria-label="Comment"><svg><use href="#i-comment"/></svg></button>
            <button class="tool" aria-label="Guidelines"><svg><use href="#i-guides"/></svg></button>
            <span class="sep"></span>
            <button class="tool drop" aria-label="New surface"><svg><use href="#i-surface"/></svg></button>
            <button class="tool drop" aria-label="New opening"><svg><use href="#i-opening"/></svg></button>
            <button class="tool drop" aria-label="Intersection"><svg><use href="#i-intersect"/></svg></button>
            <button class="tool" aria-label="New solid"><svg><use href="#i-solid"/></svg></button>
            <button class="tool drop" aria-label="Extrude"><svg><use href="#i-extrude"/></svg></button>
            <span class="sep"></span>
            <button class="tool drop" aria-label="Connect"><svg><use href="#i-release"/></svg></button>
            <button class="tool" aria-label="Nodal load"><svg><use href="#i-node-load"/></svg></button>
            <button class="tool" aria-label="Member load"><svg><use href="#i-line-load"/></svg></button>
            <button class="tool" aria-label="Line load"><svg><use href="#i-line-load"/></svg></button>
            <button class="tool" aria-label="Surface load"><svg><use href="#i-surface-load"/></svg></button>
            <button class="tool drop" aria-label="Solid load"><svg><use href="#i-solid-load"/></svg></button>
        </div>
        <div class="toolbar">
            <span class="grip"></span>
            <button class="tool" aria-label="Pan"><svg><use href="#i-pan"/></svg></button>
            <button class="tool" aria-label="Zoom window"><svg><use href="#i-zoom-win"/></svg></button>
            <button class="tool" aria-label="Show all"><svg><use href="#i-zoom-del"/></svg></button>
            <button class="tool" aria-label="Isometric"><svg><use href="#i-iso"/></svg></button>
            <button class="tool" aria-label="Perspective"><svg><use href="#i-boxes"/></svg></button>
            <span class="sep"></span>
            <button class="tool" aria-label="View X"><svg><use href="#i-view-x"/></svg></button>
            <button class="tool" aria-label="View Y"><svg><use href="#i-view-y"/></svg></button>
            <button class="tool" aria-label="View Z"><svg><use href="#i-view-z"/></svg></button>
            <button class="tool drop" aria-label="View -X"><svg><use href="#i-view-mx"/></svg></button>
            <button class="tool drop" aria-label="Visibility"><svg><use href="#i-microscope"/></svg></button>
            <span class="sep"></span>
            <button class="tool drop" aria-label="Rendering"><svg><use href="#i-render"/></svg></button>
        </div>
        <div class="toolbar">
            <span class="grip"></span>
            <button class="tool" aria-label="Deformation"><svg><use href="#i-frame"/></svg></button>
            <button class="tool" aria-label="Animation"><svg><use href="#i-tape"/></svg></button>
            <span class="sep"></span>
            <button class="tool" aria-label="Member results"><svg><use href="#i-res-member"/></svg></button>
            <button class="tool" aria-label="Surface results"><svg><use href="#i-res-surface"/></svg></button>
            <button class="tool" aria-label="Solid results"><svg><use href="#i-res-solid"/></svg></button>
            <button class="tool" aria-label="Reactions"><svg><use href="#i-reactions"/></svg></button>
            <button class="tool" aria-label="Section results"><svg><use href="#i-section-res"/></svg></button>
            <button class="tool drop" aria-label="Arrange windows"><svg><use href="#i-tiles"/></svg></button>
            <button class="tool" aria-label="Result diagrams"><svg><use href="#i-res-curve"/></svg></button>
            <button class="tool" aria-label="Result table"><svg><use href="#i-res-table"/></svg></button>
        </div>
    </div>

    <main class="workspace">
        <aside class="dock">
            <button class="dock-tab">Project Navigator - Data</button>
        </aside>

        <section class="canvas">
            <svg class="model" role="img" aria-label="Model">
                <!-- tube -->
                <path d="M139 61v580c4 4 22 4 26 0v-580z" fill="url(#tube)"/>
                <ellipse cx="152" cy="61" rx="12" ry="3" fill="#c4c4c4" stroke="#b04c4c" stroke-width="2"/>
                <ellipse cx="152" cy="291" rx="12" ry="3" fill="#b4b4b4" fill-opacity=".5" stroke="#a86868" stroke-width="2" stroke-opacity=".8"/>
                <ellipse cx="152" cy="640" rx="12" ry="3" fill="none" stroke="#c89090" stroke-width="1"/>
                <path d="M150 59h4v4h-4z" fill="#ff0000"/>
                <circle cx="152" cy="291" r="2" fill="#ff7f00"/>

                <!-- dimensions -->
                <path d="M215 76v226M215 304v346" stroke="#7fc17f" stroke-width="2"/>
                <path d="M158 62l62 12M158 292l62 12M180 645l40 8" stroke="#008000"/>
                <path d="M215 74l-3 9h6zM215 302l-3-9h6zM215 304l-3 9h6zM215 652l-3-9h6z" fill="#008000"/>
                <text class="dim" transform="translate(207 187) rotate(-90)" text-anchor="middle">3.950</text>
                <text class="dim" transform="translate(207 476) rotate(-90)" text-anchor="middle">6.000</text>

                <!-- load -->
                <path d="M52 272l70 13" stroke="#000080" stroke-width="3"/>
                <path d="M120 281l8 5-9 4z" fill="#000080"/>
                <text class="load" x="57" y="264">6.00 kN</text>

                <!-- axes -->
                <path d="M152 640l-18 8" stroke="#00ff00" stroke-width="2"/>
                <path d="M128 650l7-6 2 5z" fill="#009a00"/>
                <path d="M152 640l26 5" stroke="#ff0000" stroke-width="2"/>
                <path d="M185 646l-8-4-1 6z" fill="#b40000"/>
                <path d="M152 641v30" stroke="#0000ff" stroke-width="2"/>
                <path d="M152 679l-3-9h6z" fill="#0000a0"/>
                <text class="axis-x" x="191" y="652">X</text>
                <text class="axis-y" x="121" y="656">Y</text>
                <text class="axis-z" x="149" y="692">Z</text>
            </svg>
            <span class="units">[m]</span>

            <section class="panel">
                <header class="panel-title">
                    <h2>1.1 Nodes</h2>
                    <button aria-label="Close table"><svg viewBox="0 0 9 9"><path d="M1 1l7 7M8 1l-7 7"/></svg></button>
                </header>
                <div class="panel-tools">
                    <button class="tool on" aria-label="Edit table"><svg><use href="#i-t-edit"/></svg></button>
                    <button class="tool" aria-label="Loads table"><svg><use href="#i-t-insert"/></svg></button>
                    <button class="tool" aria-label="Load table"><svg><use href="#i-t-down"/></svg></button>
                    <button class="tool" aria-label="Results table"><svg><use href="#i-t-result"/></svg></button>
                    <button class="tool" aria-label="Dynamic table"><svg><use href="#i-t-wave"/></svg></button>
                    <span class="sep"></span>
                    <button class="tool" aria-label="Previous table"><svg><use href="#i-t-left"/></svg></button>
                    <button class="tool" aria-label="Next table"><svg><use href="#i-t-right"/></svg></button>
                    <span class="sep"></span>
                    <button class="tool on" aria-label="Synchronize selection"><svg><use href="#i-t-hook"/></svg></button>
                    <button class="tool on" aria-label="Select in graphic"><svg><use href="#i-t-hook2"/></svg></button>
                    <button class="tool" aria-label="Refresh"><svg><use href="#i-t-sync"/></svg></button>
                    <span class="sep"></span>
                    <button class="tool" aria-label="Add"><svg><use href="#i-t-plus"/></svg></button>
                    <button class="tool" aria-label="Multiply"><svg><use href="#i-t-times"/></svg></button>
                    <button class="tool" aria-label="Divide"><svg><use href="#i-t-div"/></svg></button>
                    <span class="sep"></span>
                    <button class="tool" aria-label="Clear"><svg><use href="#i-t-clear"/></svg></button>
                    <span class="sep"></span>
                    <button class="tool" aria-label="Delete row"><svg><use href="#i-row-del"/></svg></button>
                    <button class="tool" aria-label="Insert row"><svg><use href="#i-row-ins"/></svg></button>
                    <button class="tool" aria-label="Remove row"><svg><use href="#i-row-out"/></svg></button>
                    <span class="sep"></span>
                    <button class="tool" aria-label="Header rows"><svg><use href="#i-sheet-gold"/></svg></button>
                    <button class="tool" aria-label="Filled rows"><svg><use href="#i-sheet-lilac"/></svg></button>
                    <span class="sep"></span>
                    <button class="tool" aria-label="Jump to row"><svg><use href="#i-sheet-jump"/></svg></button>
                    <span class="sep"></span>
                    <button class="tool" aria-label="Table settings"><svg><use href="#i-form-hand"/></svg></button>
                    <button class="tool" aria-label="Check table"><svg><use href="#i-glasses"/></svg></button>
                    <button class="tool" aria-label="Export to Excel"><svg><use href="#i-excel"/></svg></button>
                    <button class="tool" aria-label="Calculator"><svg><use href="#i-calc"/></svg></button>
                    <span class="sep"></span>
                    <button class="tool" aria-label="Parameters"><svg><use href="#i-ab"/></svg></button>
                    <button class="tool" aria-label="Formula"><svg><use href="#i-fx"/></svg></button>
                    <button class="tool" aria-label="Delete formula"><svg><use href="#i-fx-del"/></svg></button>
                    <span class="sep"></span>
                    <button class="tool" aria-label="Unlock"><svg><use href="#i-lock"/></svg></button>
                </div>

                <div class="sheet">
                    <div class="sheet-body">
                        <table class="nodes">
                            <colgroup>
                                <col class="c-no"><col class="c-type"><col class="c-ref"><col class="c-sys">
                                <col class="c-num"><col class="c-num"><col class="c-num"><col>
                            </colgroup>
                            <thead>
                                <tr class="letters">
                                    <th rowspan="3" class="corner">Node<br>No.</th>
                                    <th>A</th><th>B</th><th>C</th><th>D</th><th>E</th><th class="picked">F</th><th>G</th>
                                </tr>
                                <tr class="names top">
                                    <th></th><th>Reference</th><th>Coordinate</th><th colspan="3">Node Coordinates</th><th></th>
                                </tr>
                                <tr class="names">
                                    <th>Node Type</th><th>Node</th><th>System</th><th>X [m]</th><th>Y [m]</th><th>Z [m]</th><th>Comment</th>
                                </tr>
                            </thead>
                            <tbody>
                                <tr><th>1</th><td>Standard</td><td class="mid">0</td><td><u>C</u>artesian</td><td class="num">0.000</td><td class="num">0.000</td><td class="num">0.000</td><td></td></tr>
                                <tr><th>2</th><td>Standard</td><td class="mid">0</td><td><u>C</u>artesian</td><td class="num">0.000</td><td class="num">0.000</td><td class="num">-9.950</td><td></td></tr>
                                <tr class="current">
                                    <th class="picked">3</th><td>Standard</td><td class="mid">0</td><td><u>C</u>artesian</td><td class="num">0.000</td><td class="num">0.000</td>
                                    <td class="editing">
                                        <div class="edit">
                                            <input type="text" value="-6.000" aria-label="Z coordinate of node 3">
                                            <span class="spin"><button aria-label="Increase"></button><button aria-label="Decrease"></button></span>
                                        </div>
                                    </td><td></td>
                                </tr>
                                <tr><th>4</th><td></td><td></td><td></td><td></td><td></td><td></td><td class="off"></td></tr>
                                <tr><th>5</th><td></td><td></td><td></td><td></td><td></td><td></td><td class="off"></td></tr>
                                <tr><th>6</th><td></td><td></td><td></td><td></td><td></td><td></td><td class="off"></td></tr>
                                <tr><th>7</th><td></td><td></td><td></td><td></td><td></td><td></td><td class="off"></td></tr>
                            </tbody>
                        </table>
                        <div class="scrollbar">
                            <button aria-label="Scroll up"><svg viewBox="0 0 8 6"><path d="M1 5l3-3 3 3"/></svg></button>
                            <div class="thumb"></div>
                            <button aria-label="Scroll down"><svg viewBox="0 0 8 6"><path d="M1 1l3 3 3-3"/></svg></button>
                        </div>
                    </div>
                    <div class="tabs">
                        <button class="selected">Nodes</button><button>Lines</button><button>Materials</button><button>Surfaces</button><button>Solids</button><button>Openings</button><button>Nodal Supports</button><button>Line Supports</button><button>Surface Supports</button><button>Line Hinges</button><button>Cross-Sections</button><button>Member Hinges</button>
                        <div class="pager">
                            <button class="dim" aria-label="First tab"><svg viewBox="0 0 9 7"><path d="M0 0h2v7H0zM8 0v7l-4-3.500z"/></svg></button>
                            <button class="dim" aria-label="Previous tab"><svg viewBox="0 0 9 7"><path d="M6 0v7l-4-3.500z"/></svg></button>
                            <button aria-label="Next tab"><svg viewBox="0 0 9 7"><path d="M3 0v7l4-3.500z"/></svg></button>
                            <button aria-label="Last tab"><svg viewBox="0 0 9 7"><path d="M7 0h2v7H7zM1 0v7l4-3.500z"/></svg></button>
                        </div>
                    </div>
                </div>
                <footer class="hint">Coordinate of node</footer>
            </section>
        </section>
    </main>

    <footer class="statusbar">
        <span class="message">Workplane</span>
        <div class="modes">
            <button class="pressed">SNAP</button>
            <button>GRID</button>
            <button class="pressed">CARTES</button>
            <button class="pressed">OSNAP</button>
            <button class="pressed">GLINES</button>
            <button class="pressed">DXF</button>
        </div>
        <div class="panes">
            <span class="wide">CS: Global XYZ</span>
            <span class="wide">Plane: XY</span>
            <span>X:<b>-1.155 m</b></span>
            <span>Y:<b>-31.729 m</b></span>
            <span class="wide">Z:<b>0.000 m</b></span>
        </div>
    </footer>
</div>

</body>
</html>
```
FILE: styles.css
```css
* {
    box-sizing: border-box;
}
body {
    margin: 0;
    font-family: "Liberation Sans", Arial, sans-serif;
    font-size: 11px;
    color: #1e1e1e;
}
button {
    border: 0;
    padding: 0;
    margin: 0;
    background: none;
    font: inherit;
    color: inherit;
}
.library {
    position: absolute;
    width: 0;
    height: 0;
}
.window {
    display: flex;
    flex-direction: column;
    height: 100vh;
    overflow: hidden;
    border: 1px solid #6b6b6b;
    background: #cfd3dc;
}

/* title bar */
.titlebar {
    display: flex;
    align-items: center;
    flex: 0 0 30px;
    padding-left: 7px;
    background: #fff;
}
.app-icon {
    width: 18px;
    height: 18px;
}
.titlebar h1 {
    margin: 0 0 0 4px;
    font: 12px Roboto, "Segoe UI", sans-serif;
    color: #000;
}
.caption-buttons {
    display: flex;
    margin-left: auto;
}
.caption-buttons button {
    width: 46px;
    height: 30px;
}
.caption-buttons svg {
    width: 11px;
    height: 11px;
    fill: none;
    stroke: #000;
}

/* menu */
.menubar {
    display: flex;
    align-items: center;
    flex: 0 0 24px;
    padding: 0 0 1px 1px;
    font-family: "Open Sans", "Segoe UI", sans-serif;
    font-size: 11px;
    color: #4a4e58;
}
.doc-icon {
    width: 18px;
    height: 14px;
}
.menubar > button {
    margin-left: 16px;
}
.menubar > .doc-icon + button {
    margin-left: 9px;
}
.mdi-buttons {
    display: flex;
    gap: 7px;
    margin: 7px 5px 0 auto;
}
.mdi-buttons svg {
    display: block;
    width: 9px;
    height: 9px;
    fill: none;
    stroke: #808080;
}

/* toolbars */
.grip {
    flex: 0 0 8px;
    height: 16px;
    background: linear-gradient(#b4b8c2 50%, transparent 50%) 3px 0 / 2px 4px repeat-y;
}
.toolrow {
    display: flex;
    gap: 2px;
    padding: 0 0 1px 1px;
}
.toolrow.last {
    padding-bottom: 0;
}
.toolbar {
    display: flex;
    align-items: center;
    height: 26px;
    padding-right: 2px;
    border-radius: 3px;
    background: linear-gradient(#eceff6, #dfe2ea 60%, #d4d7e0);
    border-bottom: 1px solid #b4b7c0;
}
.tool {
    display: flex;
    align-items: center;
    justify-content: center;
    flex: 0 0 22px;
    width: 22px;
    height: 22px;
}
.tool svg {
    flex: 0 0 18px;
    width: 18px;
    height: 18px;
}
.tool.on {
    border: 1px solid #b8843c;
    background: linear-gradient(#fbc67a, #fdd089 50%, #ffe99a);
}
.tool.drop {
    flex-basis: 35px;
    justify-content: flex-start;
    padding-left: 2px;
}
.tool.drop::after {
    content: "";
    margin-left: 7px;
    border: 3px solid transparent;
    border-top-color: #70747e;
    border-bottom: 0;
}
.sep {
    flex: 0 0 2px;
    height: 14px;
    margin: 0 3px;
    background: linear-gradient(90deg, #a8acb6 50%, #fff 50%);
}
.combo {
    position: relative;
    margin: 0 3px;
}
.combo select {
    appearance: none;
    display: block;
    width: 205px;
    height: 19px;
    padding: 0 18px 0 3px;
    border: 0;
    border-radius: 0;
    background: linear-gradient(#e3e6ec, #e3e6ec) right 1px center / 14px 17px no-repeat #fff;
    font: 11px Roboto, "Segoe UI", sans-serif;
    color: #000;
}
.combo::after {
    content: "";
    position: absolute;
    top: 8px;
    right: 5px;
    border: 3px solid transparent;
    border-top-color: #70747e;
    border-bottom: 0;
}
.glyph {
    font: 8px "Liberation Serif", serif;
    fill: #222;
}
.bold {
    font-weight: bold;
    font-size: 10px;
}
.axis {
    font: 11px "Liberation Serif", serif;
    fill: #111;
}
.formula {
    font: italic bold 16px "Liberation Serif", serif;
    fill: #222;
}
.small {
    font-size: 10px;
}
.faded {
    font-size: 12px;
    fill: #888;
}

/* work area */
.workspace {
    display: flex;
    flex: 1;
    min-height: 0;
}
.dock {
    flex: 0 0 24px;
    padding-top: 3px;
}
.dock-tab {
    writing-mode: vertical-rl;
    width: 21px;
    height: 158px;
    padding: 2px 0;
    border: 1px solid #a9a9b4;
    border-left: 0;
    background: linear-gradient(90deg, #fff0b8, #ffdc7c);
    font-family: "Open Sans", "Segoe UI", sans-serif;
    text-align: left;
    color: #4a4e58;
}
.canvas {
    position: relative;
    flex: 1;
    border: solid #6b6b6b;
    border-width: 1px 0 0 1px;
    background: #fff;
}
.model {
    display: block;
    width: 100%;
    height: 100%;
}
.model text {
    font-size: 12px;
}
.dim {
    fill: #008000;
}
.load {
    fill: #000080;
}
.model .axis-x,
.model .axis-y,
.model .axis-z {
    font-size: 10px;
}
.axis-x {
    fill: #ff0000;
}
.axis-y {
    fill: #00dd00;
}
.axis-z {
    fill: #0000ff;
}
.units {
    position: absolute;
    right: 13px;
    bottom: 6px;
    color: #000;
}

/* floating table window */
.panel {
    position: absolute;
    left: 284px;
    top: 339px;
    width: 850px;
    border: 1px solid #e4eaf2;
    border-right: 2px solid #80838c;
    border-bottom: 2px solid #80838c;
    padding: 0 2px 0 3px;
    background: linear-gradient(#e9edf6, #e4e8f0 26px, #d2d5de 52px, #efefef 53px);
}
.panel-title {
    display: flex;
    align-items: center;
    justify-content: space-between;
    height: 27px;
    padding: 4px 4px 0 2px;
}
.panel-title h2 {
    margin: 0;
    font: bold 11px "Open Sans", "Segoe UI", sans-serif;
    color: #3c4048;
}
.panel-title svg {
    display: block;
    width: 9px;
    height: 9px;
    stroke: #555;
}
.panel-tools {
    display: flex;
    align-items: flex-start;
    height: 25px;
    padding-left: 9px;
}
.panel-tools .sep {
    align-self: center;
}
.sheet {
    border: 1px solid #5c5f66;
    border-bottom: 0;
    background: #efefef;
}
.sheet-body {
    display: flex;
    padding: 1px 3px 7px;
    border-bottom: 1px solid #555;
}
.nodes {
    flex: 1;
    table-layout: fixed;
    border-collapse: separate;
    border-spacing: 0;
    color: #000;
}
.nodes th,
.nodes td {
    height: 16px;
    padding: 0 4px;
    border: solid #a0a0a0;
    border-width: 0 1px 1px 0;
    font-weight: normal;
    line-height: 13px;
    white-space: nowrap;
}
.nodes td {
    padding-top: 1px;
    line-height: 14px;
    background: #fff;
}
.c-no { width: 45px; }
.c-type { width: 84px; }
.c-ref { width: 72px; }
.c-sys { width: 90px; }
.c-num { width: 78px; }
.nodes .letters th,
.nodes tbody th {
    border-color: #606060;
    background: #e0e0e0;
    box-shadow: inset 1px 1px #fff, inset -1px -1px #a8a8a8;
}
.nodes .letters th {
    height: 15px;
    border-top: 1px solid #606060;
}
.nodes .names th {
    height: 17px;
    background: #f0f0f0;
}
.nodes .names.top th {
    height: 16px;
    border-bottom: 0;
}
.nodes .letters .corner {
    padding-top: 7px;
    border-left: 1px solid #808080;
}
.nodes tbody th {
    border-left: 1px solid #808080;
}
.nodes .letters .picked,
.nodes tbody .picked {
    background: #3399ff;
    color: #fff;
}
.nodes .mid {
    text-align: center;
}
.nodes .num {
    text-align: right;
}
.nodes .current td {
    background: #ffffc0;
}
.nodes td.off {
    background: #efefef;
}
.nodes .editing {
    padding: 0;
}
.edit {
    display: flex;
    align-items: center;
    justify-content: flex-end;
    height: 15px;
    border: 1px solid #101840;
}
.edit input {
    width: 32px;
    height: 13px;
    padding: 0;
    border: 0;
    background: #3399ff;
    font: inherit;
    text-align: right;
    color: #fff;
}
.spin {
    display: flex;
    flex-direction: column;
    gap: 1px;
    margin-left: 3px;
}
.spin button {
    width: 11px;
    height: 6px;
    border: 1px solid;
    border-color: #fff #666 #666 #fff;
    background: linear-gradient(#000, #000) center / 2px 1px no-repeat #e0e0e0;
}
.scrollbar {
    display: flex;
    flex-direction: column;
    width: 15px;
    margin-left: 2px;
    border-right: 1px solid #a0a0a0;
}
.scrollbar button {
    height: 16px;
}
.scrollbar svg {
    display: block;
    width: 8px;
    height: 6px;
    margin: 0 auto;
    fill: none;
    stroke: #444;
    stroke-width: 2;
}
.thumb {
    flex: 1;
    background: #cdcdcd;
}
.tabs {
    display: flex;
    height: 17px;
    color: #000;
}
.tabs > button {
    height: 16px;
    padding: 0 3px;
    border: 1px solid #707070;
    border-width: 0 1px 1px 0;
    border-radius: 0 0 4px 4px;
    background: #e2e2e2;
    white-space: nowrap;
}
.tabs > .selected {
    padding-right: 5px;
    background: #efefef;
}
.pager {
    display: flex;
    margin-left: auto;
}
.pager button {
    width: 16px;
    border: 1px solid;
    border-color: #fff #777 #777 #fff;
    background: #e8e8e8;
}
.pager svg {
    display: block;
    width: 9px;
    height: 7px;
    margin: 0 auto;
    fill: #000;
}
.pager .dim svg {
    fill: #a0a0a0;
}
.hint {
    height: 21px;
    padding-left: 2px;
    font: 11px/20px "Open Sans", "Segoe UI", sans-serif;
    color: #000;
}

/* status bar */
.statusbar {
    display: flex;
    align-items: stretch;
    flex: 0 0 22px;
    border-top: 1px solid #9a9da6;
    background: linear-gradient(#dfe2ea, #bcc0c9 40%, #a9adb6 50%, #b4b8c0 70%, #c3c6ce);
}
.message {
    flex: 0 0 436px;
    padding-left: 4px;
    line-height: 23px;
}
.modes {
    display: flex;
    gap: 2px;
    padding: 1px 0;
}
.modes button {
    padding: 0 2px 0 1px;
    border: 1px solid;
    border-color: #fff #9a9a9a #9a9a9a #fff;
}
.modes .pressed {
    border-color: #000 #fff #fff #000;
}
.panes {
    display: flex;
    margin-left: auto;
    line-height: 23px;
}
.panes span {
    width: 74px;
    padding-left: 2px;
    border-left: 1px solid #9a9da6;
    white-space: nowrap;
}
.panes .wide {
    width: 90px;
}
.panes .wide:first-child {
    border-left: 0;
}
.panes b {
    margin-left: 5px;
    font-weight: normal;
}
```
